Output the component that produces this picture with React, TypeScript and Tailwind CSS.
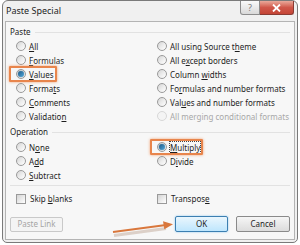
import React from "react";

const F = { fontFamily: '"Noto Sans", "Open Sans", Arial, sans-serif' };

function Radio({ checked = false, disabled = false }: { checked?: boolean; disabled?: boolean }) {
  return (
    <span
      className={
        "relative inline-flex items-center justify-center w-[10px] h-[10px] rounded-full border shrink-0 " +
        (disabled
          ? "border-[#d8d8d8] bg-[#f4f4f4]"
          : "border-[#9a9a9a] bg-gradient-to-br from-[#d4d4d4] via-[#ececec] to-[#ffffff]")
      }
    >
      {checked && (
        <span className="w-[6px] h-[6px] rounded-full bg-gradient-to-br from-[#1d5a87] to-[#52a9dc] shadow-[0_0_1px_#0b3a5c]" />
      )}
    </span>
  );
}

function Check() {
  return (
    <span className="inline-block w-[10px] h-[10px] border border-[#9a9a9a] bg-gradient-to-br from-[#d4d4d4] to-[#ffffff] shrink-0" />
  );
}

function U({ children }: { children: React.ReactNode }) {
  return <span className="underline underline-offset-[1px]">{children}</span>;
}

function Row({
  children,
  checked,
  disabled,
  box,
  focus,
}: {
  children: React.ReactNode;
  checked?: boolean;
  disabled?: boolean;
  box?: string;
  focus?: boolean;
}) {
  return (
    <div className="relative h-[14px] flex items-center gap-[3px] whitespace-nowrap">
      {box && (
        <span
          className={
            "absolute top-[-1px] left-[-7px] h-[16px] border-2 border-[#e8854c] rounded-[1px] shadow-[0_0_3px_#f0a070] " +
            box
          }
        />
      )}
      <Radio checked={checked} disabled={disabled} />
      <span
        className={
          "leading-[11px] " +
          (disabled ? "text-[#a8a8a8] " : "text-[#1e1e1e] ") +
          (focus ? "outline outline-1 outline-dotted outline-[#444]" : "")
        }
      >
        {children}
      </span>
    </div>
  );
}

function Header({ label }: { label: string }) {
  return (
    <div className="h-[14px] flex items-center pl-[4px] pr-[4px] text-[#1e1e1e]">
      <span>{label}</span>
      <span className="flex-1 h-px bg-[#e2e2e2] ml-[4px]" />
    </div>
  );
}

export default function App() {
  return (
    <div className="relative w-[300px] h-[245px] bg-white overflow-hidden text-[8px]" style={F}>
      <div className="ml-[2px] w-[296px] h-[243px] rounded-t-[6px] rounded-b-[5px] border border-[#7a7a7a] bg-[#f0f0f0] flex flex-col relative">
        {/* Title bar */}
        <div className="h-[20px] flex items-start shrink-0">
          <span className="pl-[3px] pt-[3px] text-[9px] text-[#1e1e1e]">Paste Special</span>
          <div className="ml-auto mr-[3px] flex">
            <div className="w-[20px] h-[14px] border border-t-0 border-[#8c8c8c] rounded-bl-[3px] bg-gradient-to-b from-[#fafafa] to-[#d9d9d9] flex items-center justify-center text-[9px] text-[#7a7a7a] leading-none">
              ?
            </div>
            <div className="w-[34px] h-[14px] border border-t-0 border-l-0 border-[#8a3b33] rounded-br-[3px] bg-gradient-to-b from-[#e9a99b] via-[#d0574a] to-[#c44536] flex items-center justify-center">
              <svg width="9" height="8" viewBox="0 0 9 8">
                <path d="M1 0.5 L8 7.5 M8 0.5 L1 7.5" stroke="#fff" strokeWidth="1.8" />
              </svg>
            </div>
          </div>
        </div>
        {/* Content */}
        <div className="mx-[2px] mb-[2px] flex-1 border border-[#b4b4b4] bg-[#f7f7f7] flex flex-col pt-[3px]">
          <Header label="Paste" />
          <div className="grid grid-cols-[141px_1fr] pl-[10px]">
            <div className="flex flex-col">
              <Row><U>A</U>ll</Row>
              <Row><U>F</U>ormulas</Row>
              <Row checked box="w-[48px]"><U>V</U>alues</Row>
              <Row>Forma<U>t</U>s</Row>
              <Row><U>C</U>omments</Row>
              <Row>Validatio<U>n</U></Row>
            </div>
            <div className="flex flex-col">
              <Row>All using Source t<U>h</U>eme</Row>
              <Row>All e<U>x</U>cept borders</Row>
              <Row>Column <U>w</U>idths</Row>
              <Row>Fo<U>r</U>mulas and number formats</Row>
              <Row>Val<U>u</U>es and number formats</Row>
              <Row disabled>All mer<U>g</U>ing conditional formats</Row>
            </div>
          </div>
          <div className="mt-[2px]">
            <Header label="Operation" />
          </div>
          <div className="grid grid-cols-[141px_1fr] pl-[10px] mt-px">
            <div className="flex flex-col">
              <Row>N<U>o</U>ne</Row>
              <Row>A<U>d</U>d</Row>
              <Row><U>S</U>ubtract</Row>
            </div>
            <div className="flex flex-col">
              <Row checked box="w-[53px]" focus><U>M</U>ultiply</Row>
              <Row>D<U>i</U>vide</Row>
            </div>
          </div>
          <div className="mx-[4px] mt-[3px] h-px bg-[#e2e2e2]" />
          <div className="grid grid-cols-[141px_1fr] pl-[10px] mt-[6px] text-[#1e1e1e]">
            <div className="h-[14px] flex items-center gap-[4px]">
              <Check />
              <span>Skip <U>b</U>lanks</span>
            </div>
            <div className="h-[14px] flex items-center gap-[4px]">
              <Check />
              <span>Transpos<U>e</U></span>
            </div>
          </div>
          <div className="flex items-center mt-[10px] pl-[4px] pr-[4px]">
            <div className="w-[53px] h-[15px] border border-[#c9c9c9] rounded-[2px] bg-[#f4f4f4] flex items-center justify-center text-[#a5a5a5]">
              Paste Link
            </div>
            <div className="ml-auto w-[53px] h-[16px] border border-[#3c7fb1] rounded-[2px] bg-gradient-to-b from-[#eaf6fd] to-[#bee6fd] flex items-center justify-center text-[#1e1e1e] shadow-[0_0_2px_#7fc3ef]">
              OK
            </div>
            <div className="ml-[8px] w-[54px] h-[16px] border border-[#8a8a8a] rounded-[2px] bg-gradient-to-b from-[#f6f6f6] to-[#dcdcdc] flex items-center justify-center text-[#1e1e1e]">
              Cancel
            </div>
          </div>
        </div>
      </div>
      {/* Arrow overlay */}
      <svg className="absolute left-0 top-0 pointer-events-none" width="300" height="245">
        <path d="M113 233.5 L165 226.5" stroke="#8a5a3a" strokeOpacity="0.25" strokeWidth="3" transform="translate(1,2)" />
        <path d="M113 232 L166 225" stroke="#d9773c" strokeWidth="2" />
        <path d="M173 224.2 L163 221.3 L164.3 229.2 Z" fill="#d9773c" />
      </svg>
    </div>
  );
}
